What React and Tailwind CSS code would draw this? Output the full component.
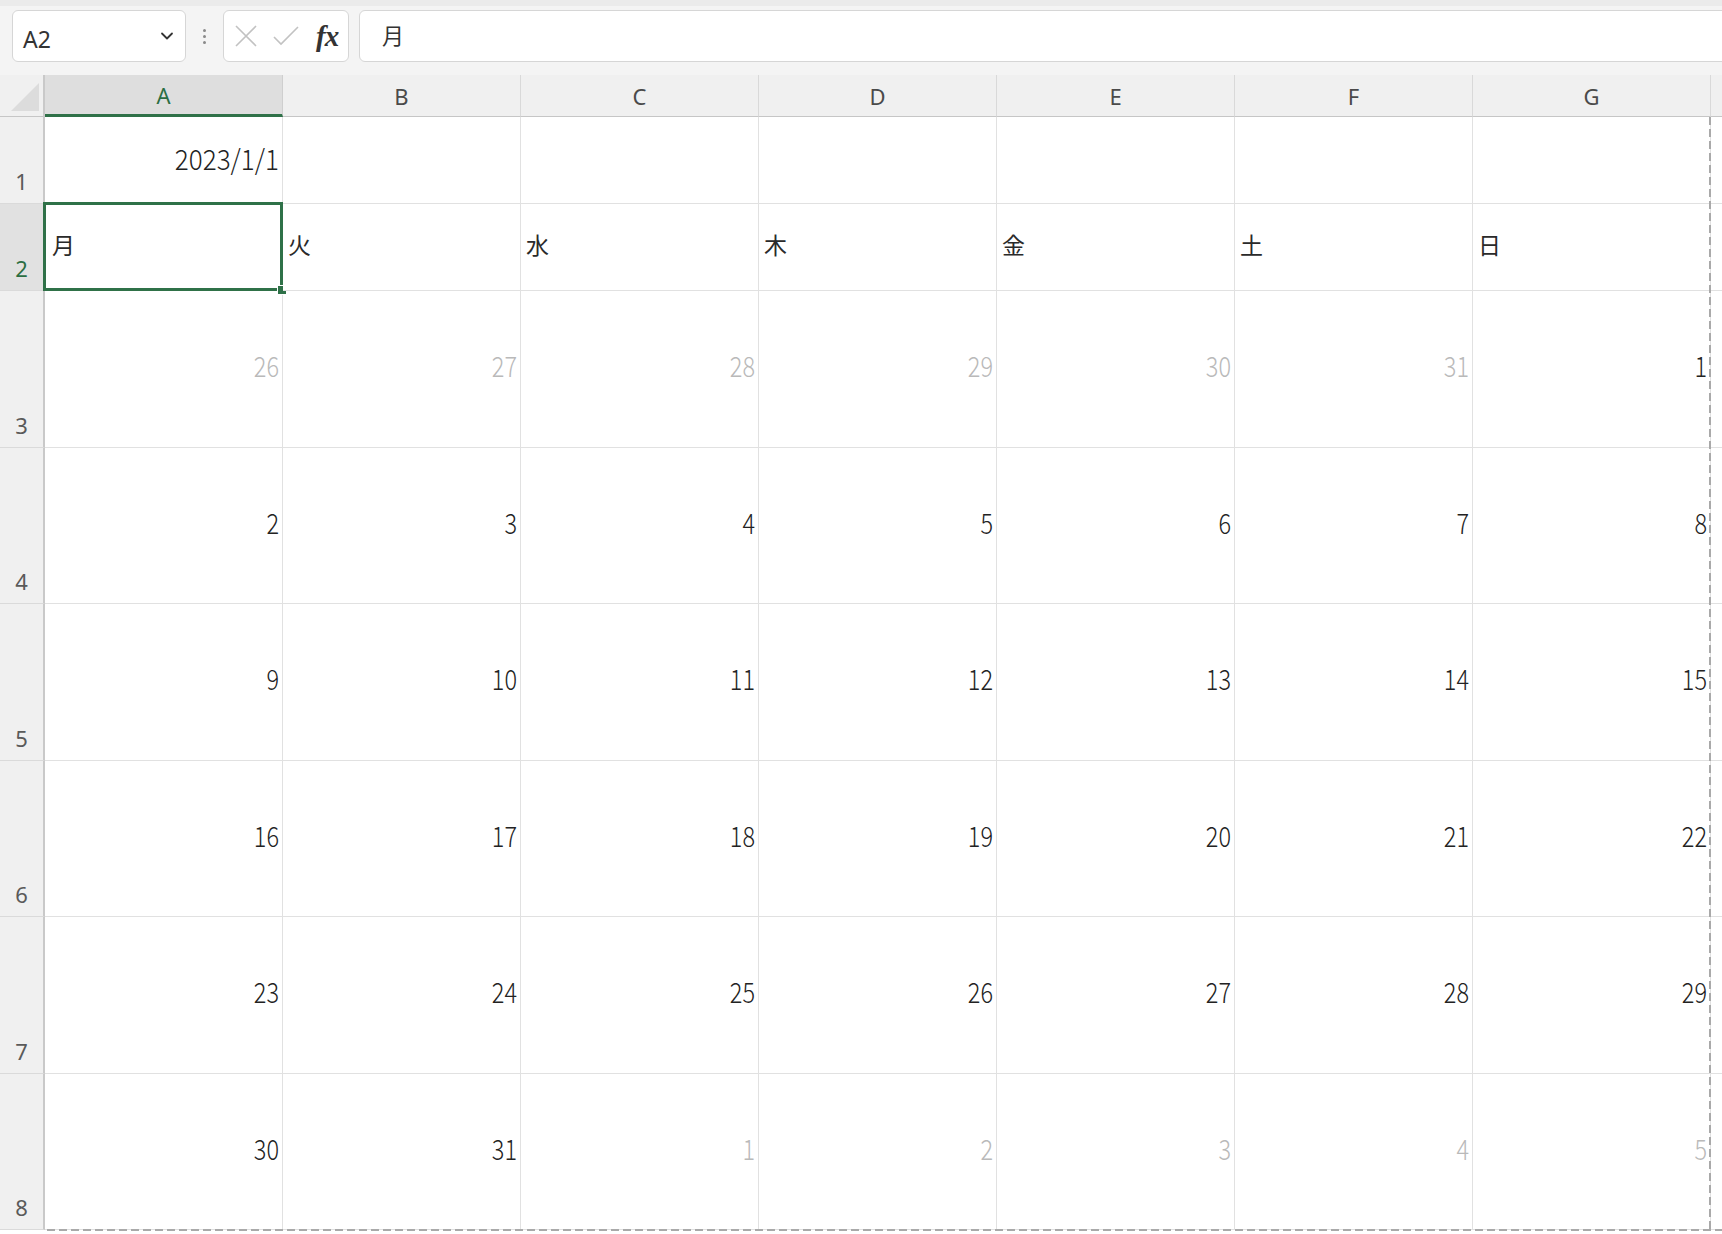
import React from 'react';

const COLS = ['A', 'B', 'C', 'D', 'E', 'F', 'G'];
const DAYS = ['月', '火', '水', '木', '金', '土', '日'];

// [value, muted]
const WEEKS = [
  [[26, 1], [27, 1], [28, 1], [29, 1], [30, 1], [31, 1], [1, 0]],
  [[2, 0], [3, 0], [4, 0], [5, 0], [6, 0], [7, 0], [8, 0]],
  [[9, 0], [10, 0], [11, 0], [12, 0], [13, 0], [14, 0], [15, 0]],
  [[16, 0], [17, 0], [18, 0], [19, 0], [20, 0], [21, 0], [22, 0]],
  [[23, 0], [24, 0], [25, 0], [26, 0], [27, 0], [28, 0], [29, 0]],
  [[30, 0], [31, 0], [1, 1], [2, 1], [3, 1], [4, 1], [5, 1]],
];

const numFont = "font-['Noto_Sans_CJK_JP',sans-serif] font-light";
const uiFont = "font-['Noto_Sans','Noto_Sans_CJK_JP',sans-serif]";

function RowHeader({ n, active }) {
  return (
    <div
      className={`flex items-end justify-center pb-[11px] border-r-2 border-r-[#c9c9c9] border-b border-b-[#dadada] text-[22px] leading-none ${uiFont} ${
        active ? 'bg-[#e1e1e1] text-[#2b6e43]' : 'bg-[#f0f0f0] text-[#5a5a5a]'
      }`}
    >
      {n}
    </div>
  );
}

function Cell({ children, className = '' }) {
  return (
    <div className={`flex items-center border-r border-b border-[#e1e1e1] bg-white ${className}`}>
      {children}
    </div>
  );
}

function Num({ children, wide }) {
  return (
    <span className={`inline-block origin-right ${wide ? 'scale-x-[0.93]' : 'scale-x-[0.84]'}`}>
      {children}
    </span>
  );
}

export default function App() {
  return (
    <div className="w-[1722px] h-[1234px] overflow-hidden bg-white">
      {/* formula bar */}
      <div className="h-[75px] bg-[#f4f4f4] border-t-[6px] border-t-[#ebebeb] flex items-start pt-[4px] pl-[12px]">
        <div className="w-[174px] h-[52px] bg-white border border-[#d6d6d6] rounded-[6px] flex items-center justify-between pl-[10px] pr-[10px]">
          <span className={`text-[23px] text-[#333] pt-[6px] ${uiFont}`}>A2</span>
          <svg width="16" height="16" viewBox="0 0 16 16" fill="none">
            <path d="M3 5.5 L8 10.5 L13 5.5" stroke="#333" strokeWidth="1.8" strokeLinecap="round" strokeLinejoin="round" />
          </svg>
        </div>
        <div className="w-[37px] h-[52px] flex flex-col items-center justify-center gap-[3px]">
          <span className="w-[3px] h-[3px] rounded-full bg-[#8a8a8a]" />
          <span className="w-[3px] h-[3px] rounded-full bg-[#8a8a8a]" />
          <span className="w-[3px] h-[3px] rounded-full bg-[#8a8a8a]" />
        </div>
        <div className="w-[126px] h-[52px] bg-white border border-[#d6d6d6] rounded-[6px] flex items-center pl-[10px] gap-[14px]">
          <svg width="24" height="24" viewBox="0 0 24 24" fill="none">
            <path d="M2 2 L22 22 M22 2 L2 22" stroke="#c2c2c2" strokeWidth="1.6" />
          </svg>
          <svg width="28" height="24" viewBox="0 0 28 24" fill="none">
            <path d="M2 13 L9 20 L26 3" stroke="#c2c2c2" strokeWidth="1.6" />
          </svg>
          <span className="font-['Liberation_Serif',serif] italic font-bold text-[29px] text-[#333] leading-none tracking-[-1px] ml-[2px]">fx</span>
        </div>
        <div className="flex-1 -mr-[20px] ml-[10px] h-[52px] bg-white border border-[#d6d6d6] rounded-[6px] flex items-center pl-[22px] pb-[4px]">
          <span className="font-['Noto_Sans_CJK_JP',sans-serif] text-[22px] text-[#333]">月</span>
        </div>
      </div>

      {/* sheet */}
      <div className="relative grid grid-cols-[45px_repeat(7,238px)_1fr] grid-rows-[42px_87px_87px_repeat(6,156.5px)]">
        {/* corner */}
        <div className="bg-[#f0f0f0] border-r-2 border-r-[#c9c9c9] border-b border-b-[#c6c6c6] flex items-end justify-end pr-[4px] pb-[5px]">
          <svg width="28" height="28" viewBox="0 0 28 28">
            <polygon points="28,0 28,28 0,28" fill="#dcdcdc" />
          </svg>
        </div>
        {COLS.map((c, i) => (
          <div
            key={c}
            className={`flex items-center justify-center text-[22px] leading-none ${uiFont} ${
              i === 0
                ? 'bg-[#dedede] text-[#2b6e43] border-b-[3px] border-b-[#2f7148] border-r border-r-[#cfcfcf]'
                : 'bg-[#f0f0f0] text-[#4a4a4a] border-b border-b-[#c6c6c6] border-r border-r-[#d9d9d9]'
            }`}
          >
            {c}
          </div>
        ))}
        <div className="bg-[#f0f0f0] border-b border-b-[#c6c6c6]" />

        {/* row 1 */}
        <RowHeader n={1} />
        <Cell className={`justify-end pr-[3px] pb-[4px] text-[28px] text-[#222] ${numFont}`}>
          <Num wide>2023/1/1</Num>
        </Cell>
        {COLS.slice(1).map((c) => (
          <Cell key={c} />
        ))}
        <Cell className="border-r-0" />

        {/* row 2 */}
        <RowHeader n={2} active />
        {DAYS.map((d, i) => (
          <Cell
            key={d}
            className={`relative pb-[6px] text-[23px] text-[#2a2a2a] font-['Noto_Sans_CJK_JP',sans-serif] ${i === 0 ? 'pl-[7px]' : 'pl-[5px]'}`}
          >
            {d}
            {i === 0 && (
              <>
                <div className="absolute -left-[2px] -top-[2px] -right-[1px] -bottom-[1px] border-[3px] border-[#2f7148] pointer-events-none" />
                <div className="absolute -right-[5px] -bottom-[5px] w-[10px] h-[10px] bg-[#2f7148] border border-white" />
              </>
            )}
          </Cell>
        ))}
        <Cell className="border-r-0" />

        {/* weeks */}
        {WEEKS.map((week, wi) => (
          <React.Fragment key={wi}>
            <RowHeader n={wi + 3} />
            {week.map(([v, muted], ci) => (
              <Cell
                key={ci}
                className={`justify-end pr-[3px] pb-[7px] text-[28px] ${numFont} ${muted ? 'text-[#b9b9b9]' : 'text-[#222]'}`}
              >
                <Num>{v}</Num>
              </Cell>
            ))}
            <Cell className="border-r-0" />
          </React.Fragment>
        ))}

        {/* page break lines */}
        <div className="absolute left-[1709px] top-[42px] bottom-0 w-[2px] bg-[repeating-linear-gradient(to_bottom,#a9a9a9_0_8px,transparent_8px_12px)]" />
        <div className="absolute left-[47px] right-0 top-[1154px] h-[2px] bg-[repeating-linear-gradient(to_right,#a9a9a9_0_8px,transparent_8px_12px)]" />
      </div>
    </div>
  );
}
